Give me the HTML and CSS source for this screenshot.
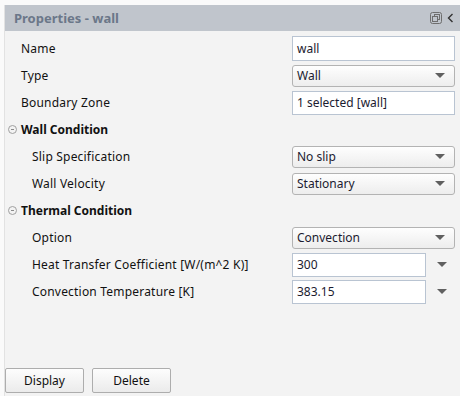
FILE: index.html
```html
<!DOCTYPE html>
<html lang="en">
<head>
    <meta charset="UTF-8">
    <title>Properties - wall</title>
    <link rel="stylesheet" href="styles.css">
</head>
<body>
    <div class="panel">
        <div class="panel-header">
            <span class="title">Properties - wall</span>
            <span class="header-icons">
                <svg width="12" height="12" viewBox="0 0 12 12">
                    <rect x="0.5" y="0.5" width="11" height="11" rx="2" fill="none" stroke="#6e6e6e"/>
                    <rect x="4.5" y="2.5" width="5" height="5" fill="none" stroke="#6e6e6e"/>
                    <rect x="2.5" y="4.5" width="5" height="5" fill="#c0c5cc" stroke="#6e6e6e"/>
                </svg>
                <svg width="7" height="10" viewBox="0 0 7 10">
                    <path d="M5.5 1 L1.5 5 L5.5 9" fill="none" stroke="#333" stroke-width="1.4"/>
                </svg>
            </span>
        </div>
        <div class="panel-body">
            <div class="row">
                <span class="label">Name</span>
                <div class="field"><div class="text-input tall">wall</div></div>
            </div>
            <div class="row">
                <span class="label">Type</span>
                <div class="field"><div class="select">Wall<span class="arrow"></span></div></div>
            </div>
            <div class="row">
                <span class="label">Boundary Zone</span>
                <div class="field"><div class="text-input">1 selected [wall]</div></div>
            </div>
            <div class="row section">
                <span class="label"><span class="toggle"></span>Wall Condition</span>
            </div>
            <div class="row sub">
                <span class="label">Slip Specification</span>
                <div class="field"><div class="select">No slip<span class="arrow"></span></div></div>
            </div>
            <div class="row sub">
                <span class="label">Wall Velocity</span>
                <div class="field"><div class="select">Stationary<span class="arrow"></span></div></div>
            </div>
            <div class="row section">
                <span class="label"><span class="toggle"></span>Thermal Condition</span>
            </div>
            <div class="row sub">
                <span class="label">Option</span>
                <div class="field"><div class="select">Convection<span class="arrow"></span></div></div>
            </div>
            <div class="row sub">
                <span class="label">Heat Transfer Coefficient [W/(m^2 K)]</span>
                <div class="field with-menu"><div class="text-input">300</div><span class="arrow"></span></div>
            </div>
            <div class="row sub">
                <span class="label">Convection Temperature [K]</span>
                <div class="field with-menu"><div class="text-input">383.15</div><span class="arrow"></span></div>
            </div>
        </div>
        <div class="panel-footer">
            <button>Display</button>
            <button>Delete</button>
        </div>
    </div>
</body>
</html>
```

FILE: styles.css
```css
body {
    margin: 0;
    background: #fafafa;
    font-family: "Noto Sans", "Open Sans", sans-serif;
    font-size: 12px;
    color: #111;
}

.panel {
    margin: 5px 0 0 4px;
    height: 391px;
    border-left: 1px solid #e2e2e2;
    background: #f3f3f3;
    display: flex;
    flex-direction: column;
}

.panel-header {
    height: 26px;
    background: #c0c5cc;
    display: flex;
    align-items: center;
    justify-content: space-between;
    padding: 0 6px 0 9px;
}

.title {
    font-weight: bold;
    font-size: 13px;
    color: #6b7789;
}

.header-icons {
    display: flex;
    align-items: center;
    gap: 5px;
}

.panel-body {
    flex: 1;
    padding: 4px 5px 0 0;
}

.row {
    display: grid;
    grid-template-columns: 1fr 163px;
    align-items: center;
    height: 27px;
    padding-left: 16px;
}

.row.sub {
    padding-left: 27px;
}

.row.section .label {
    font-weight: bold;
    display: flex;
    align-items: center;
    margin-left: -13px;
    letter-spacing: 0;
}

.toggle {
    width: 7px;
    height: 7px;
    border: 1px solid #a0a0a0;
    border-radius: 50%;
    margin-right: 4px;
    position: relative;
}

.toggle::after {
    content: "";
    position: absolute;
    left: 2px;
    top: 3px;
    width: 3px;
    height: 1px;
    background: #8a8a8a;
}

.label {
    white-space: nowrap;
    letter-spacing: 0.2px;
}

.text-input {
    height: 22px;
    border: 1px solid #b9c4d2;
    background: #fff;
    padding-left: 4px;
    line-height: 22px;
    color: #1b1b30;
}

.text-input.tall {
    height: 23px;
    line-height: 23px;
}

.select {
    height: 20px;
    border: 1px solid #b3b3b3;
    border-radius: 3px;
    background: linear-gradient(#fefefe, #ededed);
    padding-left: 4px;
    line-height: 20px;
    color: #1b1b30;
    display: flex;
    justify-content: space-between;
    align-items: center;
    padding-right: 9px;
}

.arrow {
    width: 0;
    height: 0;
    border-left: 5px solid transparent;
    border-right: 5px solid transparent;
    border-top: 5px solid #606060;
}

.field.with-menu {
    display: grid;
    grid-template-columns: 134px 1fr;
    align-items: center;
}

.field.with-menu .arrow {
    justify-self: center;
    margin-left: 2px;
}

.panel-footer {
    display: flex;
    gap: 8px;
    padding: 0 0 3px 0;
}

button {
    width: 79px;
    height: 25px;
    border: 1px solid #adadad;
    border-radius: 2px;
    background: linear-gradient(#fdfdfd, #ebebeb);
    font-family: "Noto Sans", "Open Sans", sans-serif;
    font-size: 12px;
    color: #111;
}
```
